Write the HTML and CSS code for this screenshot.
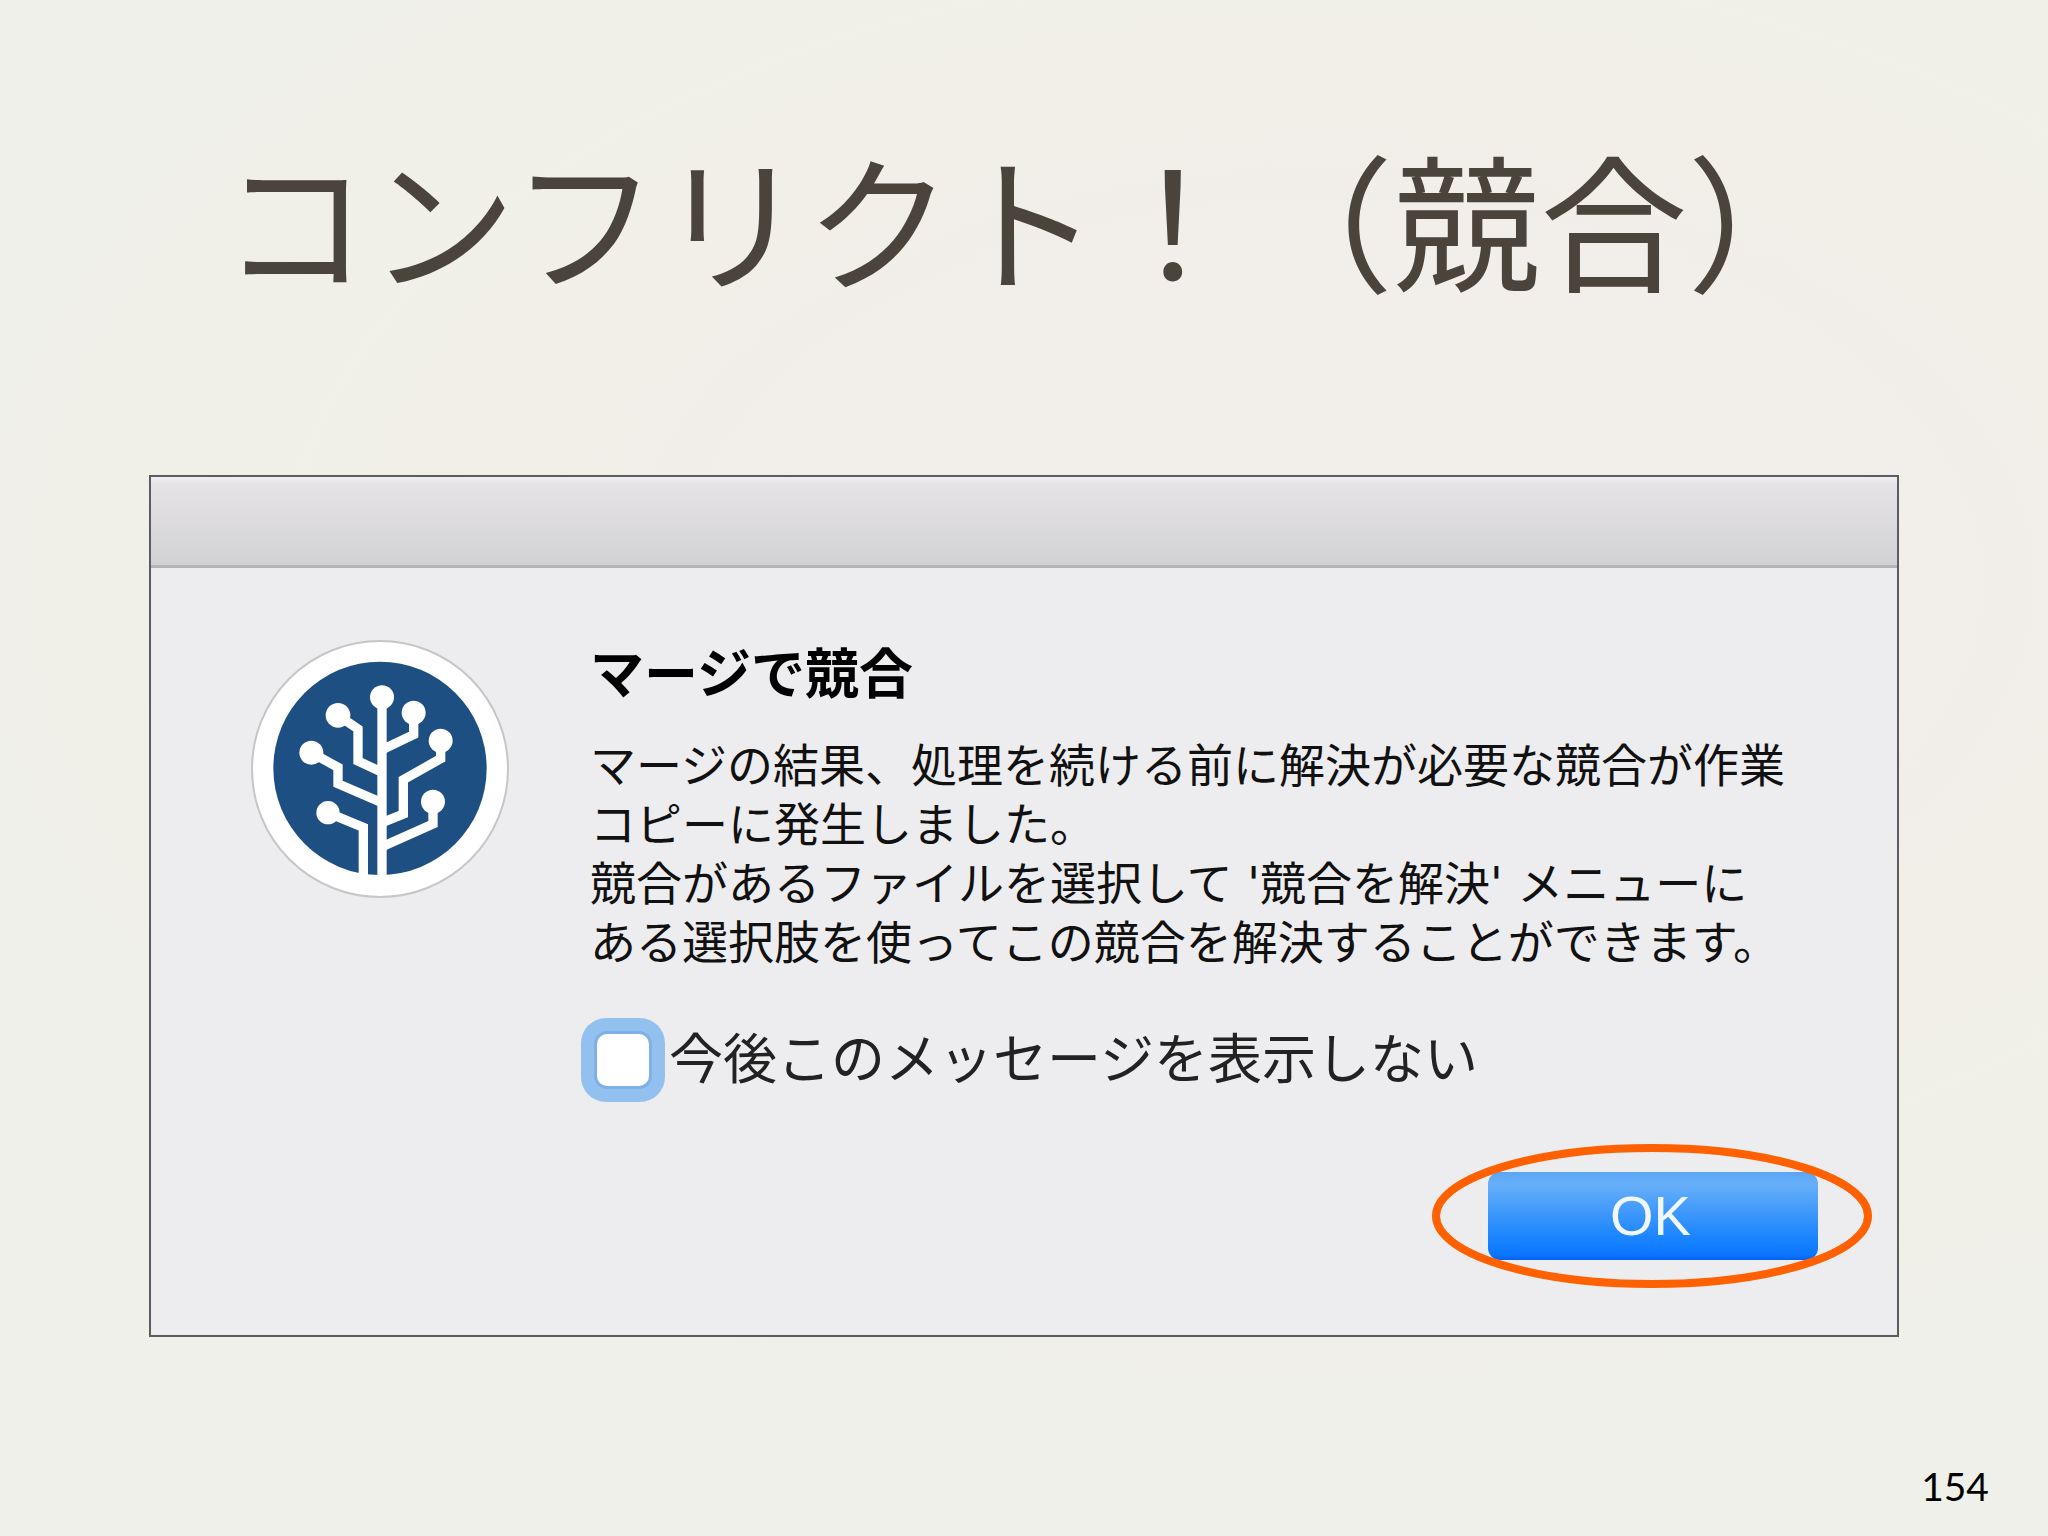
FILE: index.html
```html
<!DOCTYPE html>
<html lang="ja">
<head>
  <meta charset="utf-8">
  <meta name="viewport" content="width=device-width, initial-scale=1">
  <title>コンフリクト！（競合）</title>
  <link rel="stylesheet" href="styles.css">
</head>
<body>
  <main class="slide">
    <h1 class="slide-title">コンフリクト！（競合）</h1>

    <section class="dialog" role="dialog" aria-labelledby="dialog-heading">
      <div class="dialog-titlebar"></div>
      <div class="dialog-body">
        <svg class="dialog-icon" viewBox="60 58 780 780" aria-hidden="true">
          <circle cx="450" cy="445" r="384" fill="#fff" stroke="#c6c5c8" stroke-width="6"/>
          <circle cx="450" cy="443" r="320" fill="#1d4f83"/>
          <g fill="none" stroke="#fff" stroke-width="28">
            <path d="M456 230V765"/>
            <path d="M324 284L384 325V421L456 455"/>
            <path d="M551 275V342L456 387"/>
            <path d="M244 396L324 440V489L456 546"/>
            <path d="M632 359V414L520 477V580L456 606"/>
            <path d="M609 546V610L456 678"/>
            <path d="M293 576L400 620V762"/>
          </g>
          <g fill="#fff">
            <circle cx="456" cy="230" r="36"/>
            <circle cx="324" cy="284" r="37"/>
            <circle cx="551" cy="276" r="36"/>
            <circle cx="244" cy="396" r="36"/>
            <circle cx="632" cy="360" r="36"/>
            <circle cx="609" cy="543" r="36"/>
            <circle cx="294" cy="576" r="35"/>
          </g>
        </svg>
        <div class="dialog-content">
          <h2 class="dialog-heading" id="dialog-heading">マージで競合</h2>
          <p class="dialog-message">マージの結果、処理を続ける前に解決が必要な競合が作業<br>コピーに発生しました。<br>競合があるファイルを選択して '競合を解決' メニューに<br>ある選択肢を使ってこの競合を解決することができます。</p>
          <div class="dialog-option">
            <input class="option-box" type="checkbox" id="hide-message">
            <label class="option-label" for="hide-message">今後このメッセージを表示しない</label>
          </div>
        </div>
      </div>
      <div class="dialog-actions">
        <div class="highlight">
          <button class="ok-button" type="button">OK</button>
          <svg class="highlight-ring" viewBox="0 0 440 144" aria-hidden="true">
            <ellipse cx="220" cy="72" rx="216" ry="68" fill="none" stroke="#ff6000" stroke-width="8"/>
          </svg>
        </div>
      </div>
    </section>

    <footer class="page-number">154</footer>
  </main>
</body>
</html>
```
FILE: styles.css
```css
* {
  box-sizing: border-box;
}

body {
  margin: 0;
  font-family: "Liberation Sans", "Noto Sans CJK JP", sans-serif;
  color: #111;
}

.slide {
  display: flex;
  flex-direction: column;
  min-height: 100vh;
  padding: 112px 149px 22px;
  background: radial-gradient(ellipse 70% 55% at 65% 38%, #f2eeea 0%, #f2eeea 35%, #f1efe8 60%, #eff0e9 100%);
}

.slide-title {
  margin: 0 0 155px;
  padding-left: 8px;
  font-family: "Noto Sans CJK JP", sans-serif;
  font-size: 147px;
  font-weight: 400;
  line-height: 208px;
  text-align: center;
  white-space: nowrap;
  color: #4b443d;
}

.dialog {
  border: 2px solid #5c5c60;
  background: #edecee;
}

.dialog-titlebar {
  height: 91px;
  border-bottom: 3px solid #b4b3b6;
  background: linear-gradient(#f0eff1 0, #e5e3e6 8px, #d2d1d4 100%);
}

.dialog-body {
  display: flex;
  gap: 80px;
  padding: 72px 0 0 99px;
}

.dialog-icon {
  flex: none;
  width: 260px;
  height: 260px;
}

.dialog-heading {
  margin: 0 0 30px;
  padding-top: 3px;
  font-size: 54px;
  font-weight: 700;
  line-height: 64px;
  color: #000;
}

.dialog-message {
  margin: 0 0 45px;
  font-family: "DejaVu Sans", "Noto Sans CJK JP", sans-serif;
  font-size: 46px;
  line-height: 59px;
  white-space: nowrap;
}

.dialog-option {
  display: flex;
  align-items: center;
  gap: 20px;
  height: 84px;
  padding-left: 7px;
}

.option-box {
  appearance: none;
  flex: none;
  width: 52px;
  height: 52px;
  margin: 0;
  border-radius: 10px;
  background: #fff;
  box-shadow: 0 0 0 3px #7fb0e8, 0 0 0 16px #92c1f0;
}

.option-label {
  font-size: 54px;
  line-height: 64px;
  color: #222;
}

.dialog-actions {
  display: flex;
  justify-content: flex-end;
  padding: 70px 79px 75px;
}

.highlight {
  position: relative;
}

.ok-button {
  display: block;
  width: 330px;
  height: 88px;
  padding: 0 5px 0 0;
  border: 0;
  border-radius: 12px;
  background: linear-gradient(#5aa5f6 0, #67aff9 14%, #1a84fe 75%, #0b76ff 94%, #0560f6 100%);
  font-family: "Liberation Sans", sans-serif;
  font-size: 56px;
  line-height: 88px;
  color: #f1f7ff;
}

.highlight-ring {
  position: absolute;
  top: -28px;
  left: -56px;
  width: 440px;
  height: 144px;
  pointer-events: none;
}

.page-number {
  margin: auto -90px 0 0;
  font-family: Lato, sans-serif;
  font-size: 39px;
  line-height: 56px;
  text-align: right;
  color: #000;
}
```
